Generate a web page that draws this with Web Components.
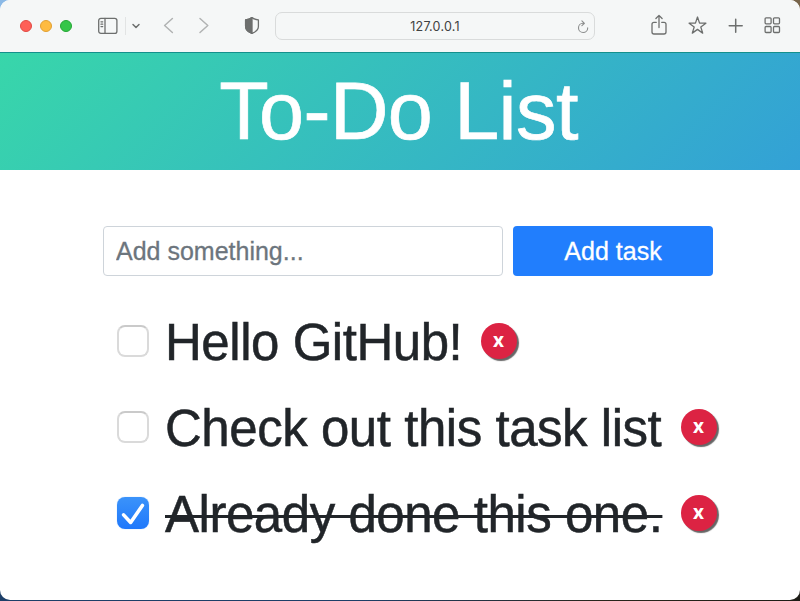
<!DOCTYPE html>
<html lang="en">
<head>
<meta charset="utf-8">
<title>To-Do List</title>
<style>
body{margin:0;width:800px;height:601px;overflow:hidden;font-family:"Liberation Sans",Arial,sans-serif;color:#212529;background:linear-gradient(90deg,#1d3f68 0,#1d3f68 45%,#29261c 75%,#1e1d17)}
</style>
</head>
<body>
<browser-window>
  <browser-toolbar slot="toolbar">127.0.0.1</browser-toolbar>
  <page-banner>To-Do List</page-banner>
  <todo-app>
    <task-form slot="form"></task-form>
    <task-row style="--w:297px">Hello GitHub!</task-row>
    <task-row style="--w:497px">Check out this task list</task-row>
    <task-row done style="--w:497px">Already done this one.</task-row>
  </todo-app>
</browser-window>
<script>
function define(name, html, setup) {
  const template = document.createElement('template');
  template.innerHTML = html;
  customElements.define(name, class extends HTMLElement {
    constructor() {
      super();
      this.attachShadow({mode: 'open'}).append(template.content.cloneNode(true));
    }
    connectedCallback() { if (setup) setup(this); }
  });
}

define('browser-window', `
<style>
:host{display:block;height:601px;background:linear-gradient(90deg,#8bb9e6 0,#8bb9e6 50%,#77644a 50%) top/100% 20px no-repeat}
.window{display:flex;flex-direction:column;height:600px;border-radius:10px;overflow:hidden;background:#fff}
</style>
<div class="window"><slot name="toolbar"></slot><slot></slot></div>`);

define('tool-icon', `
<style>
:host{display:flex;color:#6d6f6e}
svg{display:block;overflow:visible;width:20px;height:20px;fill:none;stroke:currentColor;stroke-width:1.3;stroke-linecap:round;stroke-linejoin:round}
</style><svg viewBox="0 0 20 20"></svg>`, el => {
  const shapes = {
    sidebar: '<rect x=".7" y="2.4" width="18.2" height="15" rx="2.2"/><path d="M7 2.4v15M3 5.8h1.7M3 8.2h1.7M3 10.6h1.7"/>',
    down: '<path d="m7 8.5 3 3 3-3" stroke-width="1.5"/>',
    back: '<path d="M14.4 2.5 6.6 9.5l7.8 7" stroke-width="1.5"/>',
    forward: '<path d="m6 2.5 7.8 7-7.8 7" stroke-width="1.5"/>',
    shield: '<path d="M10 1.6c2 1.4 4 2 6.4 2.3v6.5c0 3.3-2.6 5.4-6.4 7-3.8-1.6-6.4-3.7-6.4-7V3.9C6 3.6 8 3 10 1.6z"/><path d="M10 1.6C8 3 6 3.6 3.6 3.9v6.5c0 3.3 2.6 5.4 6.4 7z" fill="currentColor"/>',
    reload: '<path d="M13 6.3a4.6 4.6 0 1 0 4.7 4.6M11.9 3.9l2.5 2.4-2.5 2.4" stroke-width="1.1"/>',
    share: '<path d="M7.3 6.3H5A2 2 0 0 0 3 8.300v7.700a2 2 0 0 0 2 2h10a2 2 0 0 0 2-2V8.300a2 2 0 0 0-2-2h-2.300M10 11.500V-.500M6.900 2.500 10-.600l3.100 3.100"/>',
    star: '<path d="m10.500 1 2.050 6.100 6.350.050-5.100 3.850 1.900 6.150-5.200-3.750-5.200 3.750L7.200 11 2.100 7.150l6.350-.050z"/>',
    plus: '<path d="M10.700 3.200v13M4.200 9.700h13" stroke-width="1.5"/>',
    grid: '<rect x="2.100" y="1.800" width="6" height="6" rx="1"/><rect x="10.500" y="1.800" width="6" height="6" rx="1"/><rect x="2.100" y="10.500" width="6" height="6" rx="1"/><rect x="10.500" y="10.500" width="6" height="6" rx="1"/>'
  };
  el.shadowRoot.querySelector('svg').innerHTML = shapes[el.getAttribute('name')];
});

define('browser-toolbar', `
<style>
:host{display:flex;align-items:center;box-sizing:border-box;height:53px;flex:none;background:#f5f7f7;border-bottom:1px solid #14908c;padding-left:20px}
.lights{display:flex;gap:8px}
i{box-sizing:border-box;width:12px;height:12px;border-radius:50%;background:#fe5f57;border:1px solid #e14a43}
i:nth-child(2){background:#febb40;border-color:#e1a032}i:nth-child(3){background:#35c649;border-color:#24a735}
.rule{width:1px;height:18px;background:#e2e4e4;margin:0 0 0 7px}
.nav{color:#b1b3b3}
.address{box-sizing:border-box;display:grid;grid-template-columns:24px 1fr 24px;align-items:center;width:320px;height:28px;border:1px solid #d9dbdb;border-radius:7px;margin-left:13px;font:12.5px Inter,sans-serif;letter-spacing:.22px;text-align:center;color:#3f4141;padding-top:1px}
.address tool-icon{color:#8b8d8d}
.tools{display:flex;gap:18px;margin-left:54px}
</style>
<div class="lights"><i></i><i></i><i></i></div>
<tool-icon name="sidebar" style="margin-left:26px"></tool-icon><div class="rule"></div>
<tool-icon name="down"></tool-icon>
<tool-icon class="nav" name="back" style="margin-left:12px"></tool-icon>
<tool-icon class="nav" name="forward" style="margin-left:16px"></tool-icon>
<tool-icon name="shield" style="margin-left:28px"></tool-icon>
<div class="address"><span></span><span><slot></slot></span><tool-icon name="reload"></tool-icon></div>
<div class="tools"><tool-icon name="share"></tool-icon><tool-icon name="star"></tool-icon><tool-icon name="plus"></tool-icon><tool-icon name="grid"></tool-icon></div>`);

define('page-banner', `
<style>
:host{display:flex;flex:none;justify-content:center;box-sizing:border-box;padding-right:3px;height:117px;background:linear-gradient(135deg,#38d6aa,#33a1d6);color:#fff}
h1{margin:0;font-weight:400;font-size:81px;letter-spacing:-.6px;line-height:117px;-webkit-text-stroke:.7px #fff}
</style><h1><slot></slot></h1>`);

define('todo-app', `
<style>
:host{display:block;padding:56px 80px 0 103px}
.tasks{display:flex;flex-direction:column;margin-top:22px}
</style><slot name="form"></slot><div class="tasks"><slot></slot></div>`);

define('task-form', `
<style>
:host{display:flex;gap:10px;height:50px}
input,button{box-sizing:border-box;height:50px;border-radius:4px;font:25px "Liberation Sans",Arial,sans-serif;-webkit-text-stroke:.3px}
input{width:400px;border:1px solid #ced4da;padding:0 12px;background:#fff}
input::placeholder{color:#6c757d;opacity:1}
button{width:200px;border:0;padding:0;background:#217efd;color:#fff}
</style><input type="text" placeholder="Add something..."><button>Add task</button>`);

define('task-row', `
<style>
:host{display:flex;align-items:center;height:86px;padding-left:14px}
.check{box-sizing:border-box;width:32px;height:32px;border:2px solid #dadada;border-top-color:#cacaca;border-radius:8px;background:#fff;flex:none}
.check svg{display:none}
:host([done]) .check{border:0;background:linear-gradient(#3b93fa,#1f78fb);box-shadow:0 0 1px #8bbdff}
:host([done]) .check svg{display:block}
.label{font-size:51px;letter-spacing:-.46px;line-height:84px;white-space:nowrap;margin-left:16px;width:var(--w);flex:none;padding-top:3px;-webkit-text-stroke:.5px}
:host([done]) .label{text-decoration:line-through;text-decoration-thickness:3px}
button{width:36px;height:36px;border:0;border-radius:50%;padding:0 1px 2px 0;margin-left:19px;background:#dc2343;color:#fff;font:bold 19px "Open Sans",sans-serif;line-height:33px;box-shadow:2px 2px 1px #666;flex:none}
</style>
<div class="check" role="checkbox"><svg viewBox="0 0 34 34" fill="none" stroke="#fff" stroke-width="3.8" stroke-linecap="round" stroke-linejoin="round"><path d="m7 19 7.500 8L27 9"/></svg></div>
<span class="label"><slot></slot></span><button>x</button>`);
</script>
</body>
</html>
